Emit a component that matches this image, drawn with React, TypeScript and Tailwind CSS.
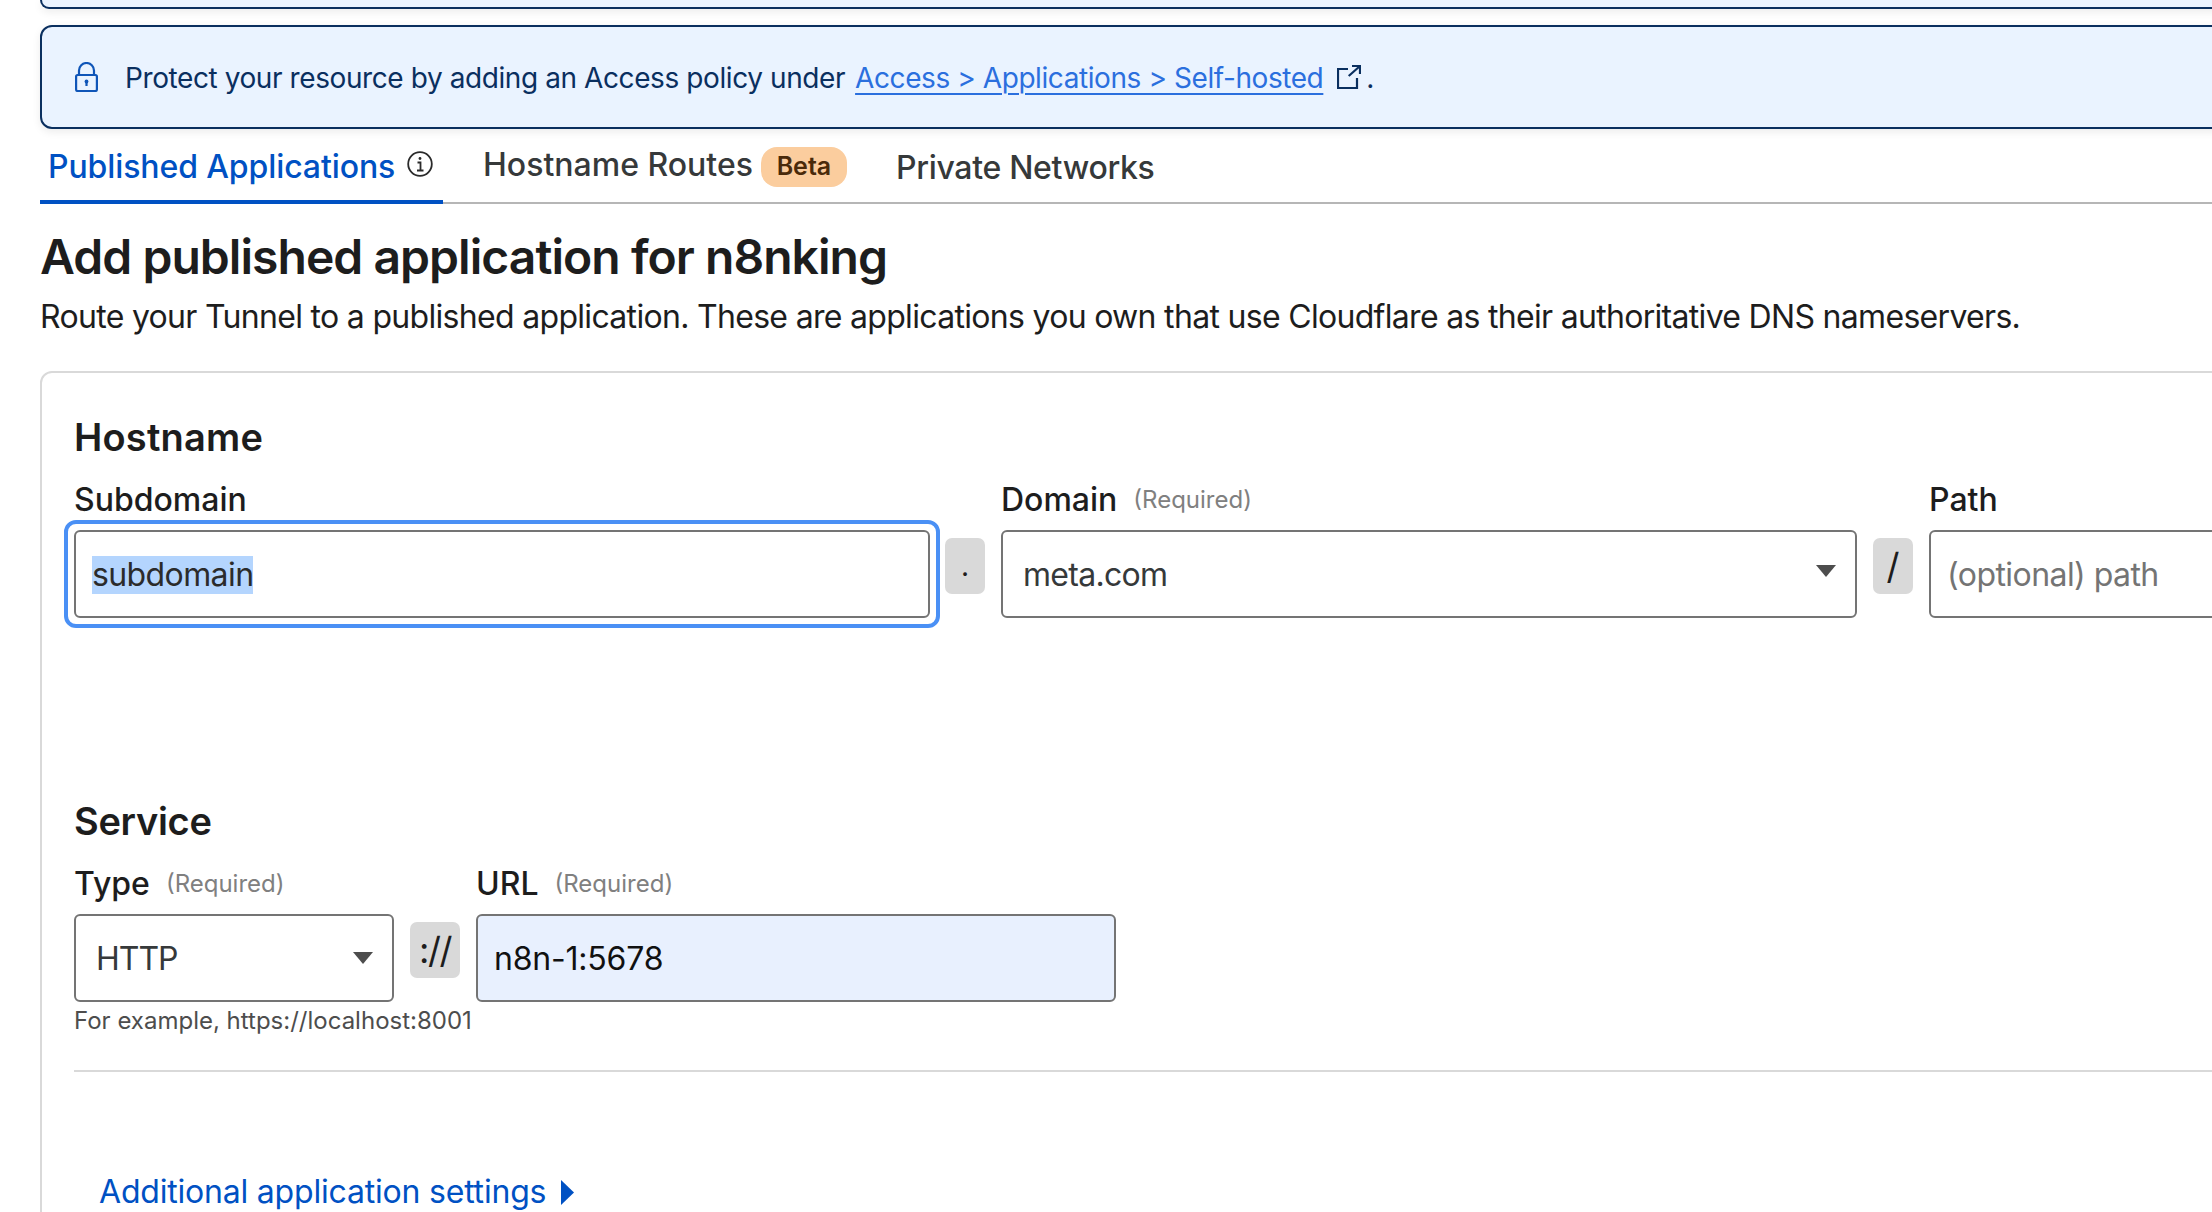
import React from "react";

const Caret = () => (
  <svg width="20" height="12" viewBox="0 0 20 12" className="shrink-0"><path d="M0 0h20L10 12z" fill="#4d4d4d" /></svg>
);

const Req = () => <span className="text-[24px] font-normal text-[#808080]">(Required)</span>;

const Sep = ({ w, children, cls }: { w: string; children: React.ReactNode; cls?: string }) => (
  <div className={`${w} h-[56px] mt-[8px] shrink-0 rounded-[7px] bg-[#d9d9d9] flex items-center justify-center text-[#1d1d1d] ${cls ?? ""}`}>{children}</div>
);

export default function App() {
  return (
    <div className="w-[2212px] h-[1212px] overflow-hidden bg-white text-[#1d1d1d] font-['Inter','Liberation_Sans',sans-serif]">
      <div className="w-[2400px] pl-[40px]">
        <div className="h-[9px] border-b-[2px] border-x-[2px] border-[#0a2f5f] rounded-b-[12px] bg-[#eaf3ff] shadow-[0_3px_8px_rgba(0,0,0,0.08)]" />
        <div className="mt-[16px] h-[104px] flex items-center pl-[33px] border-[2px] border-[#0a2f5f] rounded-[12px] bg-[#eaf3ff] shadow-[0_3px_8px_rgba(0,0,0,0.08)] text-[#0a2f5f] text-[28px]">
          <svg width="23" height="30" viewBox="0 0 23 30" fill="none" stroke="#0f55b8" strokeWidth="2.2" className="shrink-0 mr-[27px]">
            <rect x="1.1" y="13" width="20.8" height="16" rx="1.5" />
            <path d="M4 13V8.5a7.5 7.5 0 0 1 15 0V13" />
            <circle cx="11.5" cy="19.5" r="1.9" fill="#0f55b8" stroke="none" />
            <path d="M11.5 20v4" />
          </svg>
          <span className="pt-[1px] tracking-[-0.41px]">Protect your resource by adding an Access policy under</span>
          <span className="pt-[1px] ml-[10px] text-[#2b6fde] tracking-[-0.42px] underline underline-offset-[5px] decoration-[2px]">Access &gt; Applications &gt; Self-hosted</span>
          <svg width="24" height="24" viewBox="0 0 24 24" fill="none" stroke="#0a2f5f" strokeWidth="2.2" className="ml-[14px] shrink-0">
            <path d="M11 4H1v19h19V13" />
            <path d="M11.7 11L23 1M15 1h8v8" />
          </svg>
          <span className="pt-[1px] ml-[5px]">.</span>
        </div>

        <div className="mt-[3px] h-[72px] flex items-end border-b-[2px] border-[#b6b6b6]">
          <div className="h-[72px] w-[403px] shrink-0 pl-[8px] pt-[2px] flex items-center border-b-[4px] -mb-[2px] border-[#0051c3] text-[#0051c3] text-[32px] font-medium">
            <span className="tracking-[-0.1px]">Published Applications</span>
            <svg width="26" height="26" viewBox="0 0 26 26" fill="none" stroke="#2a2a2a" strokeWidth="1.8" className="ml-[12px] mb-[7px]">
              <circle cx="13" cy="13" r="11.8" />
              <path d="M10.5 11.5h3V19.5M10 19.5h6.5" />
              <circle cx="13" cy="7.5" r="1.4" fill="#2a2a2a" stroke="none" />
            </svg>
          </div>
          <div className="h-[70px] ml-[40px] shrink-0 flex items-center text-[#36393a] text-[32px] font-medium">
            <span className="pb-[4px]">Hostname Routes</span>
            <span className="ml-[8px] h-[40px] w-[86px] rounded-[16px] bg-[#fbcd9e] text-[#4a2a0a] text-[25px] font-semibold flex items-center justify-center">Beta</span>
          </div>
          <div className="h-[70px] ml-[49px] pt-[2px] shrink-0 flex items-center text-[#36393a] text-[32px] font-medium tracking-[-0.3px]">
            <span>Private Networks</span>
          </div>
        </div>

        <h1 className="mt-[25px] text-[48px] leading-[56px] font-semibold tracking-[-0.95px]">Add published application for n8nking</h1>
        <p className="mt-[10px] text-[32px] leading-[44px] text-[#1d1d1d] tracking-[-0.69px]">Route your Tunnel to a published application. These are applications you own that use Cloudflare as their authoritative DNS nameservers.</p>

        <div className="mt-[32px] h-[1000px] border-[2px] border-[#d9d9d9] rounded-[12px] pl-[32px] pt-[38px]">
          <h2 className="text-[38px] leading-[52px] font-semibold tracking-[0.2px]">Hostname</h2>
          <div className="mt-[15px] flex items-start">
            <div className="w-[856px] shrink-0">
              <div className="h-[44px] text-[32px] font-medium flex items-center">Subdomain</div>
              <div className="mt-[8px] relative h-[88px] border-[2px] border-[#747474] rounded-[6px] bg-white flex items-center pl-[16px] pt-[2px] text-[32px]">
                <span className="bg-[#b4d5fe] leading-[38px] text-[#2b2b2b] tracking-[-0.6px]">subdomain</span>
                <div className="absolute -inset-x-[12px] -inset-y-[12px] border-[4px] border-[#4a90f5] rounded-[12px]" />
              </div>
            </div>
            <div className="pt-[52px] ml-[15px] flex">
              <Sep w="w-[40px]" cls="text-[28px]">.</Sep>
            </div>
            <div className="ml-[16px] w-[856px] shrink-0">
              <div className="h-[44px] flex items-center gap-[16px] text-[32px] font-medium">Domain <Req /></div>
              <div className="mt-[8px] h-[88px] border-[2px] border-[#747474] rounded-[6px] flex items-center justify-between pl-[20px] pr-[19px] text-[32px] text-[#36393a]">
                <span className="pt-[2px] tracking-[-0.7px]">meta.com</span>
                <span className="pb-[6px]"><Caret /></span>
              </div>
            </div>
            <div className="pt-[52px] ml-[16px] flex">
              <Sep w="w-[40px]" cls="text-[36px]">/</Sep>
            </div>
            <div className="ml-[16px] w-[500px] shrink-0">
              <div className="h-[44px] flex items-center text-[32px] font-medium">Path</div>
              <div className="mt-[8px] h-[88px] border-[2px] border-[#747474] rounded-[6px] flex items-center pl-[16px] pt-[2px] text-[32px] text-[#747474] tracking-[-0.56px]">(optional) path</div>
            </div>
          </div>

          <h2 className="mt-[177px] text-[38px] leading-[52px] font-semibold tracking-[-0.3px]">Service</h2>
          <div className="mt-[15px] flex items-start">
            <div className="w-[320px] shrink-0">
              <div className="h-[44px] flex items-center gap-[16px] text-[32px] font-medium">Type <Req /></div>
              <div className="mt-[8px] h-[88px] border-[2px] border-[#747474] rounded-[6px] flex items-center justify-between pl-[20px] pr-[19px] text-[32px] text-[#36393a]">
                <span className="pt-[2px] tracking-[-1px]">HTTP</span>
                <Caret />
              </div>
            </div>
            <div className="pt-[52px] ml-[16px] flex">
              <Sep w="w-[50px]" cls="text-[36px] tracking-[-1.5px]">://</Sep>
            </div>
            <div className="ml-[16px] w-[640px] shrink-0">
              <div className="h-[44px] flex items-center gap-[16px] text-[32px] font-medium">URL <Req /></div>
              <div className="mt-[8px] h-[88px] border-[2px] border-[#747474] rounded-[6px] bg-[#e8f0fe] flex items-center pl-[16px] pt-[2px] text-[32px] text-[#111] tracking-[-0.2px]">n8n-1:5678</div>
            </div>
          </div>
          <div className="mt-[4px] text-[24px] leading-[30px] text-[#4d4d4d]">For example, https://localhost:8001</div>
          <div className="mt-[34px] h-[2px] bg-[#d9d9d9]" />
          <div className="mt-[96px] ml-[25px] h-[48px] flex items-center gap-[15px] text-[32px] text-[#0051c3]">
            <span className="tracking-[-0.2px]">Additional application settings</span>
            <svg width="13" height="25" viewBox="0 0 13 25"><path d="M0 0l13 12.5L0 25z" fill="#0051c3" /></svg>
          </div>
        </div>
      </div>
    </div>
  );
}
